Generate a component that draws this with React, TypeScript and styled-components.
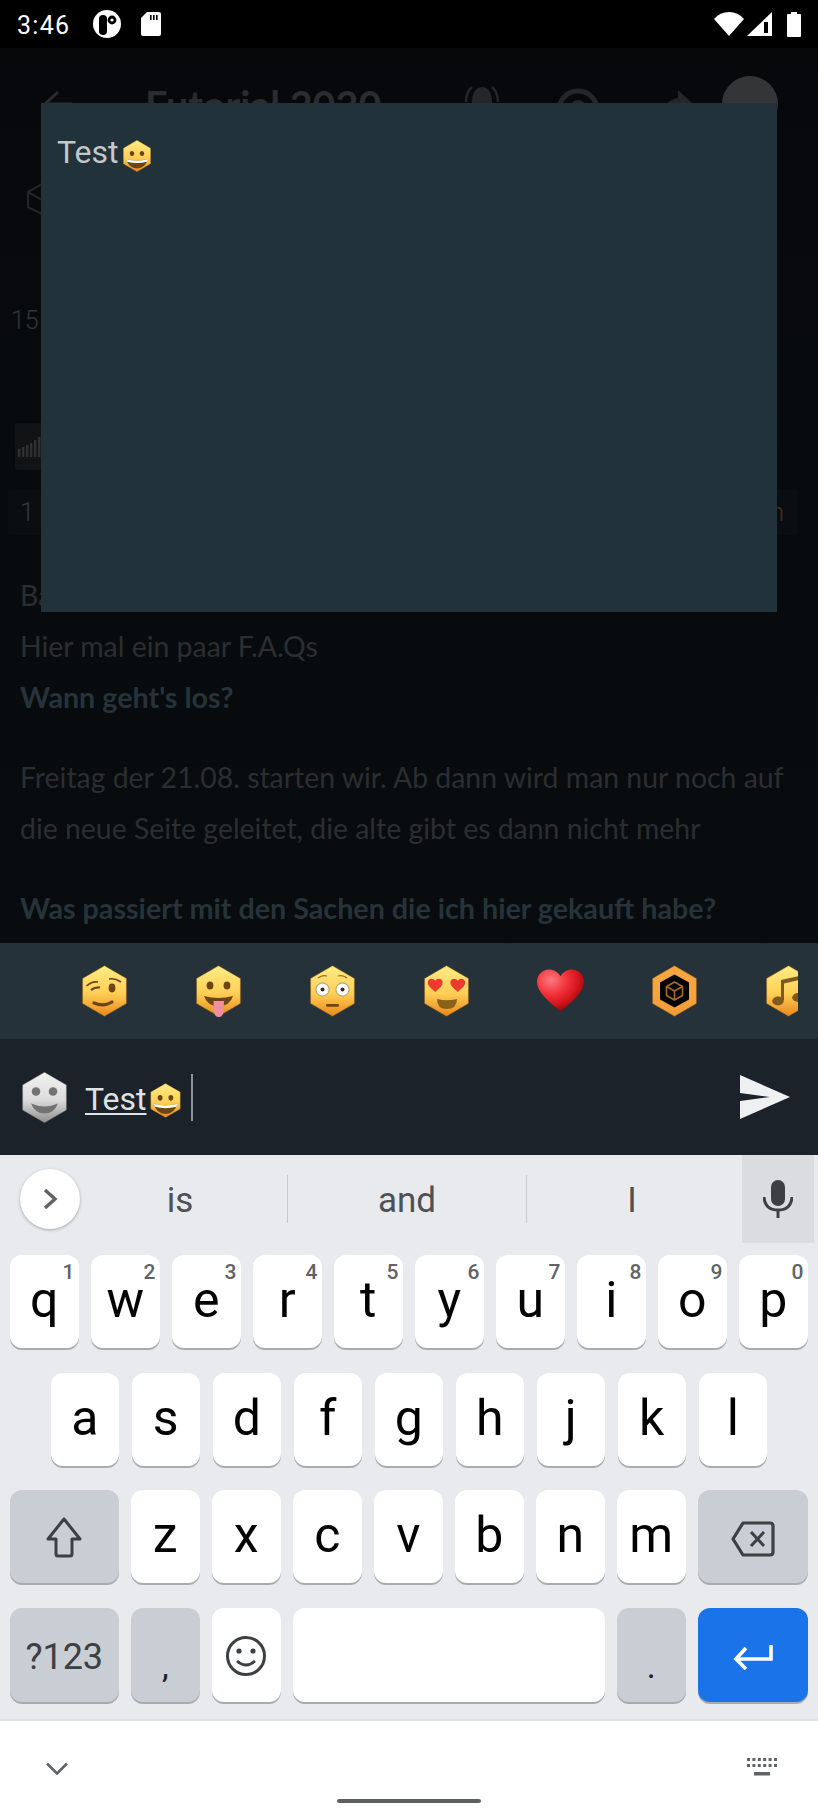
import React from "react";
import styled, { createGlobalStyle } from "styled-components";

const Global = createGlobalStyle`
  html, body { margin: 0; padding: 0; background: #000; }
  body { overflow: hidden; font-family: Roboto, "Liberation Sans", sans-serif; }
  * { box-sizing: border-box; }
`;

const Phone = styled.div`
  width: 818px;
  height: 1815px;
  display: flex;
  flex-direction: column;
  overflow: hidden;
`;

const StatusBar = styled.div`
  height: 48px;
  flex: none;
  background: #000;
  display: flex;
  align-items: center;
  padding: 0 17px;
  color: #fff;
`;
const Clock = styled.span`
  font-size: 25px;
  letter-spacing: 1.3px;
  line-height: 1;
  margin: 2px 23px 0 0;
`;
const StatusRight = styled.div`
  margin-left: auto;
  display: flex;
  align-items: center;
`;
const Glyph = styled.svg<{ $ml?: number; $mt?: number }>`
  display: block;
  flex: none;
  margin-left: ${(p) => p.$ml ?? 0}px;
  margin-top: ${(p) => p.$mt ?? 0}px;
`;

const Main = styled.main`
  position: relative;
  height: 895px;
  flex: none;
  background: linear-gradient(#06080a, #080b0e 40%, #080c0f);
  overflow: hidden;
`;
const Header = styled.div`
  height: 112px;
  display: flex;
  align-items: center;
  padding: 0 40px 0 42px;
`;
const PageTitle = styled.h1`
  margin: 0 0 0 73px;
  font: 700 39.5px Lato, sans-serif;
  color: #2a2c2d;
  flex: 1;
  white-space: nowrap;
`;
const CubeRow = styled.div`
  height: 34px;
  margin: 22px 0 0 25px;
`;
const CountRow = styled.div`
  height: 30px;
  margin: 90px 0 0 11px;
  font-size: 25px;
  line-height: 30px;
  color: #33363a;
  font-weight: 300;
`;
const BarsCard = styled.div`
  width: 300px;
  height: 47px;
  margin: 87px 0 0 15px;
  background: #111315;
  border-radius: 3px;
  display: flex;
  align-items: center;
  padding-left: 3px;
`;
const InfoCard = styled.div`
  height: 46px;
  margin: 19px 20px 0 8px;
  background: #0b0e10;
  border-radius: 3px;
  display: flex;
  align-items: center;
  justify-content: space-between;
  padding: 0 14px 0 12px;
  font-size: 26px;
  font-weight: 300;
  color: #33363a;
`;
const Accent = styled.span`
  color: #4a2d12;
`;
const Article = styled.div`
  margin: 35px 0 0 20px;
  font: 400 28.4px/51px Lato, sans-serif;
  color: #2c2e30;
`;
const Line = styled.div`
  white-space: nowrap;
`;
const Question = styled.div<{ $gap?: boolean }>`
  font-weight: 700;
  font-size: 28.7px;
  color: #273338;
  white-space: nowrap;
  margin-top: ${(p) => (p.$gap ? 29 : 0)}px;
`;
const Paragraph = styled.div`
  margin-top: 29px;
`;

const Modal = styled.div`
  position: absolute;
  left: 41px;
  top: 55px;
  width: 736px;
  height: 509px;
  background: #22323a;
  padding: 31px 16px;
  display: flex;
  align-items: flex-start;
  color: #c3c8ca;
  font-size: 32px;
  line-height: 36px;
`;
const ModalEmoji = styled.span`
  margin: 5px 0 0 4px;
`;

const EmojiBar = styled.div`
  height: 96px;
  flex: none;
  background: #263239;
`;
const EmojiStrip = styled.div`
  width: 798px;
  height: 96px;
  padding-left: 47px;
  display: flex;
  overflow: hidden;
`;
const EmojiCell = styled.div`
  flex: 0 0 114px;
  display: flex;
  align-items: center;
  justify-content: center;
`;

const InputBar = styled.div`
  height: 116px;
  flex: none;
  background: #1b2229;
  display: flex;
  align-items: center;
  padding: 0 28px 0 22px;
`;
const Typed = styled.span`
  margin: 4px 0 0 18px;
  color: #dfe3e6;
  font-size: 32px;
  line-height: 40px;
  text-decoration: underline;
  text-decoration-thickness: 2px;
  text-underline-offset: 3px;
`;
const TypedEmoji = styled.span`
  margin: 6px 0 0 3px;
`;
const Caret = styled.div`
  width: 2px;
  height: 47px;
  margin-left: 10px;
  background: #8e9397;
`;
const SendBtn = styled.div`
  margin-left: auto;
`;

const Keyboard = styled.div`
  height: 566px;
  flex: none;
  background: #e8eaed;
  border-bottom: 2px solid #dfe1e5;
`;
const SuggestRow = styled.div`
  height: 88px;
  position: relative;
  display: flex;
  align-items: flex-start;
  padding-left: 20px;
`;
const ExpandBtn = styled.div`
  width: 60px;
  height: 60px;
  margin-top: 14px;
  flex: none;
  border-radius: 50%;
  background: #fff;
  box-shadow: 0 1px 3px rgba(60, 64, 67, 0.4);
  display: flex;
  align-items: center;
  justify-content: center;
`;
const Suggestion = styled.div<{ $w: number; $sep?: boolean }>`
  width: ${(p) => p.$w}px;
  height: 48px;
  margin-top: 20px;
  flex: none;
  display: flex;
  align-items: center;
  justify-content: center;
  font-size: 35px;
  color: #4d5156;
  border-right: ${(p) => (p.$sep ? "1.5px solid #c6c8cc" : "none")};
  padding: 3px 0 0;
`;
const FirstSuggestion = styled(Suggestion)`
  padding-right: 7px;
`;
const MicBox = styled.div`
  width: 72px;
  height: 88px;
  margin-left: auto;
  margin-right: 4px;
  background: #dadce0;
  display: flex;
  align-items: center;
  justify-content: center;
`;
const KeyGrid = styled.div`
  margin-top: 12px;
  display: flex;
  flex-direction: column;
  gap: 22.5px;
`;
const KeyRow = styled.div<{ $indent: number; $h?: number }>`
  height: ${(p) => p.$h ?? 95}px;
  display: flex;
  gap: 12.5px;
  padding-left: ${(p) => p.$indent}px;
`;
const Key = styled.div<{ $w?: number; $kind?: "fn" | "go" }>`
  position: relative;
  width: ${(p) => p.$w ?? 68.5}px;
  height: calc(100% - 2px);
  flex: none;
  border-radius: 12px;
  background: ${(p) => (p.$kind === "fn" ? "#c9cdd4" : p.$kind === "go" ? "#1a73e8" : "#fff")};
  box-shadow: 0 2px 0 #a9abb0;
  display: flex;
  align-items: center;
  justify-content: center;
  color: #000;
  font-size: 50px;
  line-height: 1;
  padding-bottom: 3px;
`;
const Hint = styled.span`
  position: absolute;
  top: 5px;
  right: 4px;
  font-size: 21px;
  font-weight: 500;
  line-height: 24px;
  color: #5f6368;
`;
const SymbolLabel = styled.span`
  font-size: 36px;
  color: #3c4043;
  margin-top: 7px;
`;
const PunctLabel = styled.span`
  font-size: 34px;
  color: #202124;
  margin-top: 26px;
`;

const NavBar = styled.div`
  height: 94px;
  flex: none;
  background: #fff;
  position: relative;
`;
const NavIcons = styled.div`
  height: 92px;
  display: flex;
  justify-content: space-between;
  align-items: flex-start;
  padding: 37px 41px 0 46px;
`;
const HomePill = styled.div`
  position: absolute;
  left: 337px;
  top: 78px;
  width: 144px;
  height: 4px;
  border-radius: 2px;
  background: #5f6062;
`;

const HEX = "22.5,0.8 44.4,13.4 44.4,38.6 22.5,51.2 0.6,38.6 0.6,13.4";

type Tone = "gold" | "gray" | "orange";

const HexBase: React.FC<{
  id: string;
  w?: number;
  h?: number;
  tone?: Tone;
  children?: React.ReactNode;
}> = ({ id, w = 45, h = 52, tone = "gold", children }) => {
  const stops =
    tone === "gray"
      ? ["#f2f2f2", "#dcdcdc", "#8f8f8f"]
      : tone === "orange"
      ? ["#f7a540", "#f7a540", "#f09a35"]
      : ["#ffec85", "#ffcf55", "#e8861d"];
  return (
    <Glyph width={w} height={h} viewBox="0 0 45 52">
      <defs>
        <linearGradient id={id} x1="0" y1="0" x2="0" y2="1">
          <stop offset="0" stopColor={stops[0]} />
          <stop offset="0.55" stopColor={stops[1]} />
          <stop offset="1" stopColor={stops[2]} />
        </linearGradient>
      </defs>
      <polygon
        points={HEX}
        fill={`url(#${id})`}
        stroke={tone === "gray" ? "#6d6d6d" : "#9c6312"}
        strokeOpacity="0.55"
        strokeWidth="0.8"
        strokeLinejoin="round"
      />
      {children}
    </Glyph>
  );
};

const BROWN = "#6b4513";

const GrinFace: React.FC<{ id: string; w: number; h: number }> = ({ id, w, h }) => (
  <HexBase id={id} w={w} h={h}>
    <ellipse cx="14.5" cy="22" rx="3.6" ry="4.2" fill={BROWN} />
    <ellipse cx="30.5" cy="22" rx="3.6" ry="4.2" fill={BROWN} />
    <path d="M5 31 Q22.5 36 40 31 Q36 46 22.5 46 Q9 46 5 31Z" fill={BROWN} />
    <path d="M5 31 Q22.5 36 40 31 L38.6 35.4 Q22.5 39.4 6.4 35.4Z" fill="#fff" />
  </HexBase>
);

const GrayFace = () => (
  <HexBase id="hexGray" w={45} h={53} tone="gray">
    <circle cx="14" cy="20" r="4.3" fill="#737373" />
    <circle cx="31" cy="20" r="4.3" fill="#737373" />
    <path d="M9 32 Q22.5 38 36 32 Q32 42 22.5 42 Q13 42 9 32Z" fill="#737373" />
  </HexBase>
);

const WinkFace = () => (
  <HexBase id="hexWink">
    <path d="M4.5 21 Q10 16 16 17" fill="none" stroke={BROWN} strokeWidth="1.6" />
    <path d="M9 25 Q13 22 18 22.5" fill="none" stroke={BROWN} strokeWidth="2.2" />
    <path d="M27 14 Q33 13 39 17" fill="none" stroke={BROWN} strokeWidth="1.6" />
    <ellipse cx="30" cy="23" rx="3.4" ry="4.4" fill={BROWN} />
    <path d="M12 38 Q22 42 30 37" fill="none" stroke={BROWN} strokeWidth="3.2" strokeLinecap="round" />
  </HexBase>
);

const TongueFace = () => (
  <HexBase id="hexTongue">
    <ellipse cx="14" cy="20.5" rx="3.4" ry="4" fill={BROWN} />
    <ellipse cx="31" cy="20.5" rx="3.4" ry="4" fill={BROWN} />
    <path d="M8 31 Q22.5 35 37 31 Q34 41 22.5 41 Q11 41 8 31Z" fill={BROWN} />
    <path d="M17.5 36 L28 36 L27.5 46 Q27 52 22.8 52 Q18.5 52 18 46Z" fill="#f08f9d" />
  </HexBase>
);

const FlushedFace = () => (
  <HexBase id="hexFlushed">
    <path d="M8 13 Q12 9.5 17 11" fill="none" stroke="#9a6a1d" strokeWidth="1.3" />
    <path d="M28 11 Q33 9.5 37 13" fill="none" stroke="#9a6a1d" strokeWidth="1.3" />
    <circle cx="12.5" cy="24.5" r="6.6" fill="#fff" stroke="#b9a873" strokeWidth="1.2" />
    <circle cx="32.5" cy="24.5" r="6.6" fill="#fff" stroke="#b9a873" strokeWidth="1.2" />
    <circle cx="12.5" cy="24.5" r="2" fill="#3c2a10" />
    <circle cx="32.5" cy="24.5" r="2" fill="#3c2a10" />
    <rect x="16" y="39" width="13" height="2.8" rx="1.4" fill={BROWN} />
  </HexBase>
);

const HEART_D =
  "M12 21 C5 15.4 0.5 11.2 0.5 6.5 C0.5 3 3.2 0.5 6.4 0.5 C8.6 0.5 10.8 1.7 12 3.8 C13.2 1.7 15.4 0.5 17.6 0.5 C20.8 0.5 23.5 3 23.5 6.5 C23.5 11.2 19 15.4 12 21Z";

const LoveFace = () => (
  <HexBase id="hexLove">
    <svg x="3.5" y="13" width="15.5" height="15" viewBox="0 0 24 22">
      <path d={HEART_D} fill="#ee3a2c" />
    </svg>
    <svg x="26" y="13" width="15.5" height="15" viewBox="0 0 24 22">
      <path d={HEART_D} fill="#ee3a2c" />
    </svg>
    <path d="M13 34 Q22.5 36.5 33 34 Q33 44 22.5 44 Q13 44 13 34Z" fill="#8a6119" />
  </HexBase>
);

const Heart = () => (
  <Glyph width="49" height="48" viewBox="0 0 24 22">
    <defs>
      <radialGradient id="heartFill" cx="0.3" cy="0.25" r="0.85">
        <stop offset="0" stopColor="#fb7a80" />
        <stop offset="0.42" stopColor="#f22f37" />
        <stop offset="0.72" stopColor="#cb1319" />
        <stop offset="1" stopColor="#800000" />
      </radialGradient>
    </defs>
    <path d={HEART_D} fill="url(#heartFill)" />
  </Glyph>
);

const BoxBadge = () => (
  <HexBase id="hexBox" tone="orange">
    <polygon points="22.5,9.5 37,17.5 37,34.5 22.5,42.5 8,34.5 8,17.5" fill="#000" />
    <g fill="none" stroke="#a86a24" strokeWidth="1.6" strokeLinejoin="round">
      <polygon points="22.5,17 30.5,21.5 30.5,30.5 22.5,35 14.5,30.5 14.5,21.5" />
      <path d="M14.5 21.5 L22.5 26 L30.5 21.5 M22.5 26 V35" />
    </g>
  </HexBase>
);

const MusicBadge = () => (
  <HexBase id="hexMusic">
    <g fill="#7d5a1c">
      <path d="M15 15 L38 10 V14 L18 18.5 V35 H15Z" />
      <path d="M35 13 H38 V31 H35Z" />
      <ellipse cx="12" cy="36" rx="5.8" ry="4.4" />
      <ellipse cx="32" cy="32.5" rx="5.8" ry="4.4" />
    </g>
  </HexBase>
);

const SendIcon = () => (
  <Glyph width="50" height="44" viewBox="0 0 50 44">
    <path d="M0 0 L50 22 L0 44 V26 L30 22 L0 18Z" fill="#eef0f1" />
  </Glyph>
);

const rows1: [string, string][] = [
  ["q", "1"], ["w", "2"], ["e", "3"], ["r", "4"], ["t", "5"],
  ["y", "6"], ["u", "7"], ["i", "8"], ["o", "9"], ["p", "0"],
];
const rows2 = ["a", "s", "d", "f", "g", "h", "j", "k", "l"];
const rows3 = ["z", "x", "c", "v", "b", "n", "m"];

const GRAY = "#3c4043";

export default function App() {
  return (
    <Phone>
      <Global />
      <StatusBar>
        <Clock>3:46</Clock>
        <Glyph width="28" height="28" viewBox="0 0 28 28">
          <ellipse cx="14" cy="14" rx="14" ry="14" fill="#fff" />
          <rect x="6" y="5" width="8" height="20" rx="4" fill="#000" />
          <circle cx="19" cy="10" r="4.4" fill="#000" />
          <circle cx="19" cy="10" r="1.6" fill="#fff" />
        </Glyph>
        <Glyph width="20" height="24" viewBox="0 0 20 24" $ml={20}>
          <path d="M6 0 H18 Q20 0 20 2 V22 Q20 24 18 24 H2 Q0 24 0 22 V6Z" fill="#fff" />
          <path d="M9 3h1.6v5H9zM12 3h1.6v5H12zM15 3h1.6v5H15z" fill="#000" />
        </Glyph>
        <StatusRight>
          <Glyph width="30" height="24" viewBox="0 0 30 24">
            <path d="M15 24 L0 7 Q6 0 15 0 Q24 0 30 7Z" fill="#fff" />
          </Glyph>
          <Glyph width="25" height="24" viewBox="0 0 25 24" $ml={3}>
            <path d="M25 0 V24 H0Z" fill="#fff" />
            <path d="M21 10 H17 V21 H21Z" fill="#000" />
          </Glyph>
          <Glyph width="14" height="25" viewBox="0 0 14 25" $ml={15}>
            <path d="M4 2 V0 H10 V2 H13 Q14 2 14 3 V24 Q14 25 13 25 H1 Q0 25 0 24 V3 Q0 2 1 2Z" fill="#fff" />
          </Glyph>
        </StatusRight>
      </StatusBar>

      <Main>
        <Header>
          <Glyph width="30" height="30" viewBox="0 0 30 30">
            <path d="M16 3 L3 15 L16 27 M3 15 H30" fill="none" stroke="#2a2c2d" strokeWidth="3" />
          </Glyph>
          <PageTitle>Futorial 2020</PageTitle>
          <Glyph width="40" height="40" viewBox="0 0 40 40">
            <path d="M20 3 Q30 4 30 18 V30 H10 V18 Q10 4 20 3Z" fill="#252628" />
            <path d="M4 18 Q4 8 10 3 M36 18 Q36 8 30 3" fill="none" stroke="#252628" strokeWidth="2.5" />
          </Glyph>
          <Glyph width="44" height="44" viewBox="0 0 44 44" $ml={54} $mt={12}>
            <circle cx="22" cy="22" r="19" fill="none" stroke="#252628" strokeWidth="5" />
            <circle cx="22" cy="20" r="6" fill="none" stroke="#252628" strokeWidth="4" />
          </Glyph>
          <Glyph width="32" height="32" viewBox="0 0 32 32" $ml={60}>
            <path d="M18 2 L32 15 L18 28 V20 Q8 20 2 28 Q4 12 18 10Z" fill="#252628" />
          </Glyph>
          <Glyph width="56" height="56" viewBox="0 0 56 56" $ml={30}>
            <circle cx="28" cy="28" r="28" fill="#333537" />
          </Glyph>
        </Header>
        <CubeRow>
          <Glyph width="34" height="34" viewBox="0 0 34 34">
            <path d="M17 2 L31 10 V25 L17 32 L3 25 V10Z M3 10 L17 18 L31 10 M17 18 V32" fill="none" stroke="#222426" strokeWidth="2.2" />
          </Glyph>
        </CubeRow>
        <CountRow>15</CountRow>
        <BarsCard>
          <Glyph width="26" height="20" viewBox="0 0 26 20">
            <path d="M0 12h2.4v8H0zM4 10h2.4v10H4zM8 8h2.4v12H8zM12 6h2.4v14H12zM16 3h2.4v17H16zM20 0h2.4v20H20z" fill="#2f3133" />
          </Glyph>
        </BarsCard>
        <InfoCard>
          <span>1</span>
          <Accent>n</Accent>
        </InfoCard>
        <Article>
          <Line>Ba</Line>
          <Line>Hier mal ein paar F.A.Qs</Line>
          <Question>Wann geht's los?</Question>
          <Paragraph>
            <Line>Freitag der 21.08. starten wir. Ab dann wird man nur noch auf</Line>
            <Line>die neue Seite geleitet, die alte gibt es dann nicht mehr</Line>
          </Paragraph>
          <Question $gap>Was passiert mit den Sachen die ich hier gekauft habe?</Question>
        </Article>
        <Modal>
          <span>Test</span>
          <ModalEmoji>
            <GrinFace id="hexGrinModal" w={28} h={34} />
          </ModalEmoji>
        </Modal>
      </Main>

      <EmojiBar>
        <EmojiStrip>
          <EmojiCell><WinkFace /></EmojiCell>
          <EmojiCell><TongueFace /></EmojiCell>
          <EmojiCell><FlushedFace /></EmojiCell>
          <EmojiCell><LoveFace /></EmojiCell>
          <EmojiCell><Heart /></EmojiCell>
          <EmojiCell><BoxBadge /></EmojiCell>
          <EmojiCell><MusicBadge /></EmojiCell>
        </EmojiStrip>
      </EmojiBar>

      <InputBar>
        <GrayFace />
        <Typed>Test</Typed>
        <TypedEmoji>
          <GrinFace id="hexGrinInput" w={31} h={35} />
        </TypedEmoji>
        <Caret />
        <SendBtn><SendIcon /></SendBtn>
      </InputBar>

      <Keyboard>
        <SuggestRow>
          <ExpandBtn>
            <svg width="16" height="24" viewBox="0 0 16 24">
              <path d="M3 3 L13 12 L3 21" fill="none" stroke="#5f6368" strokeWidth="3.4" />
            </svg>
          </ExpandBtn>
          <FirstSuggestion $w={208} $sep>is</FirstSuggestion>
          <Suggestion $w={239} $sep>and</Suggestion>
          <Suggestion $w={210}>I</Suggestion>
          <MicBox>
            <svg width="30" height="38" viewBox="0 0 30 38">
              <rect x="8" y="0" width="14" height="26" rx="7" fill={GRAY} />
              <path d="M1 17 Q2 30 15 30 Q28 30 29 17" fill="none" stroke={GRAY} strokeWidth="3" />
              <rect x="13.5" y="29" width="3" height="9" fill={GRAY} />
            </svg>
          </MicBox>
        </SuggestRow>
        <KeyGrid>
          <KeyRow $indent={10}>
            {rows1.map(([k, d]) => (
              <Key key={k}>
                {k}
                <Hint>{d}</Hint>
              </Key>
            ))}
          </KeyRow>
          <KeyRow $indent={50.5}>
            {rows2.map((k) => (
              <Key key={k}>{k}</Key>
            ))}
          </KeyRow>
          <KeyRow $indent={10}>
            <Key $w={108.5} $kind="fn">
              <Glyph width="38" height="56" viewBox="0 0 38 56" $mt={5}>
                <path d="M19 9 L35 29 H27 V44 Q27 46 25 46 H13 Q11 46 11 44 V29 H3Z" fill="none" stroke={GRAY} strokeWidth="3" strokeLinejoin="round" />
              </Glyph>
            </Key>
            {rows3.map((k) => (
              <Key key={k}>{k}</Key>
            ))}
            <Key $w={110} $kind="fn">
              <Glyph width="44" height="36" viewBox="0 0 44 36" $mt={7}>
                <path d="M12 2 H39 Q42 2 42 5 V31 Q42 34 39 34 H12 L2 18Z" fill="none" stroke={GRAY} strokeWidth="3.2" strokeLinejoin="round" />
                <path d="M20 11 L33 25 M33 11 L20 25" stroke={GRAY} strokeWidth="3" />
              </Glyph>
            </Key>
          </KeyRow>
          <KeyRow $indent={10} $h={96}>
            <Key $w={108.5} $kind="fn">
              <SymbolLabel>?123</SymbolLabel>
            </Key>
            <Key $kind="fn">
              <PunctLabel>,</PunctLabel>
            </Key>
            <Key>
              <Glyph width="42" height="42" viewBox="0 0 42 42" $mt={5}>
                <circle cx="21" cy="21" r="18.5" fill="none" stroke={GRAY} strokeWidth="3" />
                <circle cx="14" cy="16" r="2.6" fill={GRAY} />
                <circle cx="28" cy="16" r="2.6" fill={GRAY} />
                <path d="M12 26 Q21 34 30 26" fill="none" stroke={GRAY} strokeWidth="2.8" />
              </Glyph>
            </Key>
            <Key $w={311.5} />
            <Key $kind="fn">
              <PunctLabel>.</PunctLabel>
            </Key>
            <Key $w={110} $kind="go">
              <Glyph width="40" height="26" viewBox="0 0 40 26" $mt={7}>
                <path d="M38 1 V15 H4 M13 4 L3 15 L13 25" fill="none" stroke="#fff" strokeWidth="3.6" />
              </Glyph>
            </Key>
          </KeyRow>
        </KeyGrid>
      </Keyboard>

      <NavBar>
        <NavIcons>
          <Glyph width="22" height="13" viewBox="0 0 22 13" $mt={4}>
            <path d="M1 1.5 L11 11.5 L21 1.5" fill="none" stroke="#5f6368" strokeWidth="2.6" />
          </Glyph>
          <Glyph width="30" height="18" viewBox="0 0 30 18">
            <path
              d="M0 0h3v3H0zM5.4 0h3v3h-3zM10.8 0h3v3h-3zM16.2 0h3v3h-3zM21.6 0h3v3h-3zM27 0h3v3h-3zM0 6h3v3H0zM5.4 6h3v3h-3zM10.8 6h3v3h-3zM16.2 6h3v3h-3zM21.6 6h3v3h-3zM27 6h3v3h-3zM7 14h16v3.5H7z"
              fill="#5f6368"
            />
          </Glyph>
        </NavIcons>
        <HomePill />
      </NavBar>
    </Phone>
  );
}
